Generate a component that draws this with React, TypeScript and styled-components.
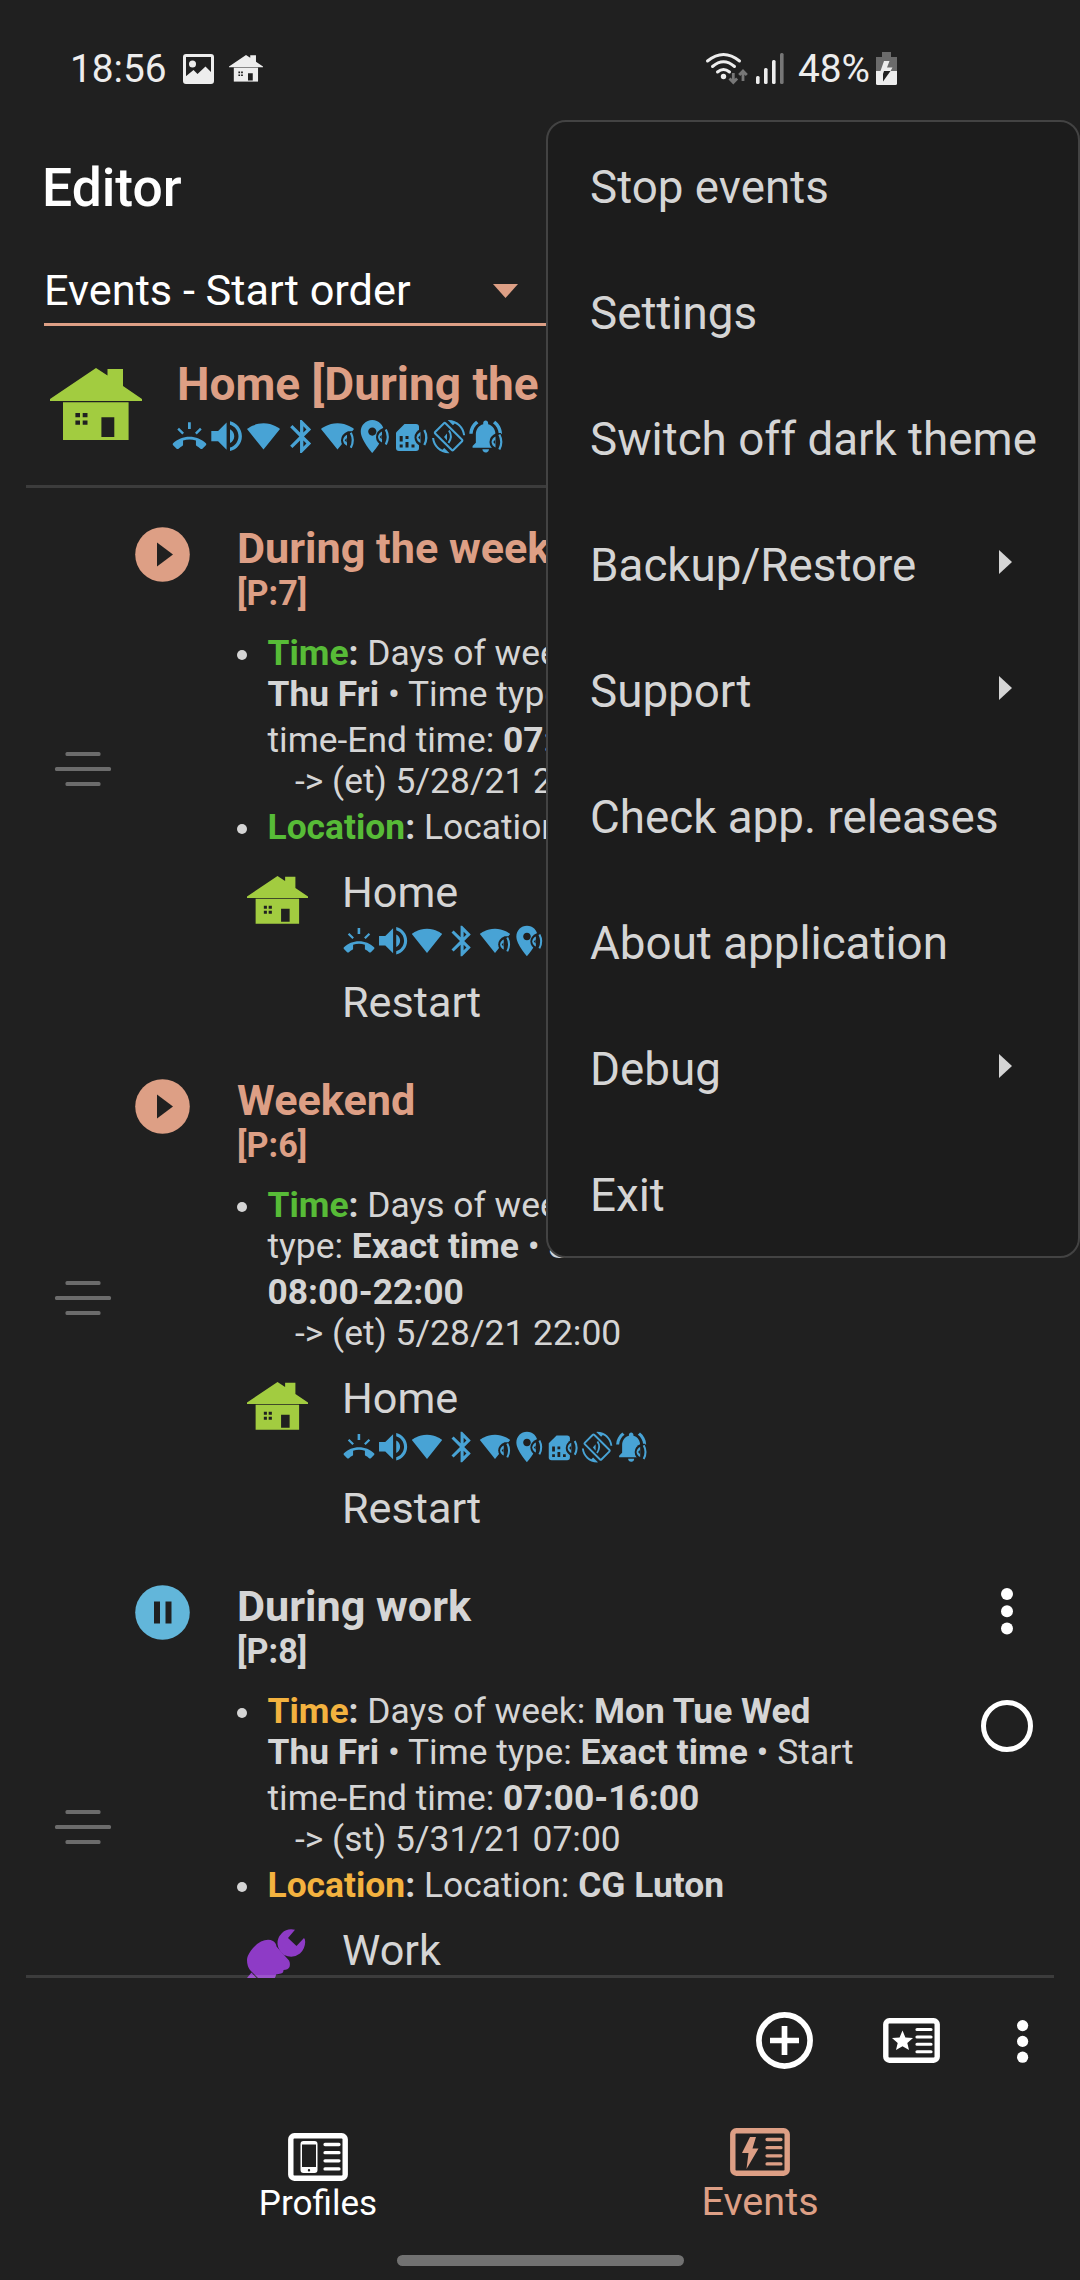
import React from "react";
import styled, { createGlobalStyle } from "styled-components";

const color = {
  bg: "#202020",
  menu: "#1c1c1c",
  border: "#434343",
  text: "#d5d5d5",
  accent: "#dd9f85",
  blue: "#48a3d5",
  ok: "#57bb37",
  wait: "#f3b23f",
  house: "#a2cc40",
  work: "#8e3bc6",
};

const GlobalStyle = createGlobalStyle`
  * { box-sizing: border-box; }
  body { margin: 0; background: ${color.bg}; }
`;

const Screen = styled.div`
  position: relative;
  width: 1080px;
  height: 2280px;
  overflow: hidden;
  display: flex;
  flex-direction: column;
  background: ${color.bg};
  color: ${color.text};
  font-family: Roboto, "Noto Sans", sans-serif;
`;

const Icon = styled.svg`
  display: block;
  flex: none;
  overflow: visible;
`;

/* ---------- status bar ---------- */
const StatusBar = styled.header`
  flex: none;
  display: flex;
  justify-content: space-between;
  align-items: center;
  height: 137px;
  padding: 0 183px 0 70px;
  color: #ededed;
  font-size: 38.8px;
  line-height: 46px;
`;
const StatusGroup = styled.div`
  display: flex;
  align-items: center;
`;
const StatusIcon = styled(Icon)<{ $left: number }>`
  margin-left: ${(p) => p.$left}px;
`;
const Percent = styled.span`
  margin-left: 14px;
`;

/* ---------- top ---------- */
const TitleBar = styled.h1`
  flex: none;
  margin: 0;
  height: 103px;
  padding-left: 42px;
  color: #fff;
  font-size: 53.4px;
  font-weight: 500;
  line-height: 101px;
`;
const Spinner = styled.div`
  flex: none;
  display: flex;
  align-items: center;
  height: 86px;
  margin: 0 44px;
  padding-top: 18px;
  border-bottom: 3px solid ${color.accent};
  color: #fff;
  font-size: 43.3px;
`;
const SpinnerText = styled.span`
  width: 449px;
`;
const ActiveProfile = styled.section`
  flex: none;
  display: flex;
  height: 162px;
  margin: 0 26px;
  padding: 31px 0 0 24px;
  border-bottom: 3px solid #3c3c3c;
`;
const ActiveText = styled.div`
  padding-left: 29px;
`;
const ActiveName = styled.div`
  padding-left: 6px;
  color: ${color.accent};
  font-size: 46px;
  font-weight: 700;
  line-height: 54px;
  white-space: nowrap;
`;
const HeaderHouse = styled.div`
  padding-top: 10.5px;
`;
const Indicators = styled.div<{ $top: number }>`
  display: flex;
  margin-top: ${(p) => p.$top}px;
`;

/* ---------- event list ---------- */
const EventList = styled.main`
  flex: none;
  height: 1490px;
  padding-top: 5px;
  overflow: hidden;
`;
const EventItem = styled.article`
  display: flex;
  height: max-content;
  padding-bottom: 17px;
`;
const HandleCell = styled.div`
  display: flex;
  align-items: center;
  width: 134.5px;
  padding: 17px 0 0 55px;
`;
const StateCell = styled.div`
  width: 102.5px;
  padding-top: 34px;
`;
const Body = styled.div`
  width: 709px;
  padding-top: 31px;
  white-space: nowrap;
`;
const EventName = styled.div<{ $active?: boolean }>`
  color: ${(p) => (p.$active ? color.accent : color.text)};
  font-size: 43.2px;
  font-weight: 700;
  line-height: 50px;
`;
const Priority = styled.div<{ $active?: boolean }>`
  color: ${(p) => (p.$active ? color.accent : color.text)};
  font-size: 34.2px;
  font-weight: 700;
  line-height: 38px;
`;
const Sensors = styled.ul`
  list-style: none;
  margin: 21px 0 0;
  padding: 0;
  font-size: 35.4px;
  line-height: 41px;
`;
const Sensor = styled.li`
  display: flex;
  padding-bottom: 5px;
`;
const Bullet = styled.span`
  flex: none;
  width: 10px;
  height: 10px;
  margin: 17px 20.5px 0 0;
  border-radius: 50%;
  background: ${color.text};
`;
const Line = styled.div<{ $gap?: boolean; $indent?: boolean }>`
  margin-top: ${(p) => (p.$gap ? 5 : 0)}px;
  padding-left: ${(p) => (p.$indent ? 27.5 : 0)}px;
`;
const SensorName = styled.b<{ $ok?: boolean }>`
  color: ${(p) => (p.$ok ? color.ok : color.wait)};
`;
const ProfileRow = styled.div`
  display: flex;
  margin-top: 15px;
`;
const ProfileIcon = styled.div<{ $top: number }>`
  width: 105px;
  padding: ${(p) => p.$top}px 0 0 9.5px;
`;
const ProfileName = styled.div`
  font-size: 43.2px;
  line-height: 50px;
`;
const AfterEnd = styled(ProfileName)`
  margin-top: 20px;
`;
const Actions = styled.div`
  display: flex;
  flex-direction: column;
  align-items: center;
  width: 121px;
  padding-top: 37px;
  gap: 66px;
`;
const RunState = styled.span`
  width: 52px;
  height: 52px;
  border: 5.5px solid #fff;
  border-radius: 50%;
`;

/* ---------- bottom ---------- */
const Divider = styled.div`
  flex: none;
  height: 3px;
  margin: -3px 26px 0;
  background: rgba(255, 255, 255, 0.13);
  z-index: 1;
`;
const Toolbar = styled.div`
  flex: none;
  display: flex;
  justify-content: flex-end;
  align-items: center;
  gap: 70px;
  height: 125px;
  padding-right: 52px;
  color: #fff;
`;
const Overflow = styled.div`
  margin: 1px 0 0 7px;
`;
const Tabs = styled.nav`
  flex: none;
  display: grid;
  grid-template-columns: 442px 442px;
  justify-content: center;
  height: 152px;
  padding-right: 2px;
`;
const Tab = styled.div<{ $active?: boolean }>`
  display: flex;
  flex-direction: column;
  align-items: center;
  padding-top: ${(p) => (p.$active ? 24.5 : 30)}px;
  color: ${(p) => (p.$active ? color.accent : "#fff")};
  font-size: ${(p) => (p.$active ? 39.6 : 35.1)}px;
  line-height: ${(p) => (p.$active ? 52 : 44)}px;
`;
const GestureBar = styled.div`
  flex: none;
  width: 287px;
  height: 11px;
  margin: 0 auto;
  border-radius: 6px;
  background: #717171;
`;

/* ---------- popup menu ---------- */
const Menu = styled.div`
  position: absolute;
  z-index: 2;
  top: 120px;
  left: 546px;
  width: 534px;
  height: 1138px;
  border: 2px solid ${color.border};
  border-radius: 20px;
  background: ${color.menu};
`;
const MenuItem = styled.div`
  display: flex;
  justify-content: space-between;
  align-items: center;
  height: 126px;
  padding: 6px 66px 0 42px;
  font-size: 45.75px;
  line-height: 54px;
  white-space: nowrap;
`;
const SubmenuArrow = styled(Icon)`
  margin-bottom: 8px;
`;

/* ---------- drawings ---------- */
const House = ({ w, fill, hole = color.bg }: { w: number; fill: string; hole?: string }) => (
  <Icon width={w} height={(w * 72) / 92} viewBox="0 0 92 72" fill={fill}>
    <path d="M46 0 57.5 7.5V1H73V18L92 31V33H0V31Z" />
    <path d="M13 34.3H78.6V72H13Z" />
    <path fill={hole} d="M25.4 45H30v4.3H25.4ZM32.7 45h4.8v4.3H32.7ZM25.4 52.6H30v4.2H25.4ZM32.7 52.6h4.8v4.2H32.7ZM51.4 49.3H64.3V69H51.4Z" />
  </Icon>
);

const WIFI = "M12.01 21.49L23.64 7c-.45-.34-4.93-4-11.64-4C5.28 3 .81 6.66.36 7l11.63 14.49.01.01.01-.01z";

const Link = ({ x, y }: { x: number; y: number }) => (
  <g transform={`translate(${x} ${y})`}>
    <path fill={color.bg} d="M1.5-9Q-5.5-6-5.5 0T1.5 9L6 9V-9Z" />
    <path d="M-3.5 0Q-3 -4 .5 -5.5V5.5Q-3 4-3.5 0Z" />
    <path fill={color.bg} d="M-1.8 0 .2-2.2V2.2Z" />
    <path d="M4.3-7.5Q8.3 0 4.3 7.5" fill="none" stroke={color.blue} strokeWidth="2.2" />
  </g>
);

const glyphs: React.ReactNode[] = [
  <>
    <path d="M17 4.3h2.8V11H17ZM6.3 11.4 8 9.7l5 5-1.7 1.7ZM30.7 11.4 29 9.7l-5 5 1.7 1.7Z" />
    <path transform="translate(1.7 8.9) scale(1.4)" d="M12 9c-1.6 0-3.15.25-4.6.72v3.1c0 .39-.23.74-.56.9-.98.49-1.87 1.12-2.66 1.85-.18.18-.43.28-.7.28-.28 0-.53-.11-.71-.29L.29 13.08c-.18-.17-.29-.42-.29-.7 0-.28.11-.53.29-.71C3.34 8.78 7.46 7 12 7s8.66 1.78 11.71 4.67c.18.18.29.43.29.71 0 .28-.11.53-.29.71l-2.48 2.48c-.18.18-.43.29-.71.29-.27 0-.52-.11-.7-.28-.79-.74-1.69-1.36-2.67-1.85-.33-.16-.56-.5-.56-.9v-3.1C15.15 9.25 13.6 9 12 9z" />
  </>,
  <path transform="translate(-1.8 -2.2) scale(1.7)" d="M3 9v6h4l5 5V4L7 9H3zm13.5 3c0-1.77-1.02-3.29-2.5-4.03v8.05c1.48-.73 2.5-2.25 2.5-4.02zM14 3.23v2.06c2.89.86 5 3.54 5 6.71s-2.11 5.85-5 6.71v2.06c4.01-.91 7-4.49 7-8.77s-2.99-7.86-7-8.77z" />,
  <path transform="translate(1.5 1.05) scale(1.417)" d={WIFI} />,
  <path transform="translate(-.1 -1.3) scale(1.65)" d="M17.71 7.71L12 2h-1v7.59L6.41 5 5 6.41 10.59 12 5 17.59 6.41 19 11 14.41V22h1l5.71-5.71-4.3-4.29 4.3-4.29zM13 5.83l1.88 1.88L13 9.59V5.83zm1.88 10.46L13 18.17v-3.76l1.88 1.88z" />,
  <>
    <path transform="translate(1.5 1.05) scale(1.417)" d={WIFI} />
    <Link x={27.5} y={22.3} />
  </>,
  <>
    <path transform="translate(-3.5 -1.3) scale(1.65)" d="M12 2C8.13 2 5 5.13 5 9c0 5.25 7 13 7 13s7-7.75 7-13c0-3.87-3.13-7-7-7zm0 9.5c-1.38 0-2.5-1.12-2.5-2.5s1.12-2.5 2.5-2.5 2.5 1.12 2.5 2.5-1.12 2.5-2.5 2.5z" />
    <Link x={25.5} y={19} />
  </>,
  <>
    <path d="M11.5 6H23a3 3 0 0 1 3 3V30a3 3 0 0 1-3 3H6a3 3 0 0 1-3-3V14.5Z" />
    <path fill={color.bg} d="M6.7 18h3v5.5h-3ZM6.7 26.5h3v3h-3ZM12.5 18h3v3h-3ZM12.5 24h3v5.5h-3ZM18.5 26.5h3v3h-3Z" />
    <Link x={27} y={19.5} />
  </>,
  <>
    <path transform="translate(2 2) scale(1.385)" d="M16.48 2.52c3.27 1.55 5.61 4.72 5.97 8.48h1.5C23.44 4.84 18.29 0 12 0l-.66.03 3.81 3.81 1.33-1.32zm-6.25-.77c-.59-.59-1.54-.59-2.12 0L1.75 8.11c-.59.59-.59 1.54 0 2.12l12.02 12.02c.59.59 1.54.59 2.12 0l6.36-6.36c.59-.59.59-1.54 0-2.12L10.23 1.75zm4.6 19.44L2.81 9.17l6.36-6.36 12.02 12.02-6.36 6.36zm-7.31.29C4.25 19.94 1.91 16.76 1.55 13H.05C.56 19.16 5.71 24 12 24l.66-.03-3.81-3.81-1.33 1.32z" />
    <path d="M14 19l3-3.5v7Z" />
    <path d="M19 12.5Q23 18.5 18.5 25" fill="none" stroke={color.blue} strokeWidth="2" />
  </>,
  <>
    <path transform="translate(-1 -1.5) scale(1.64)" d="M7.58 4.08L6.15 2.65C3.75 4.48 2.17 7.3 2.03 10.5h2c.15-2.65 1.51-4.97 3.55-6.42zm12.39 6.42h2c-.15-3.2-1.73-6.02-4.12-7.85l-1.42 1.43c2.02 1.45 3.39 3.77 3.54 6.42zM18 11c0-3.07-1.64-5.64-4.5-6.32V4c0-.83-.67-1.5-1.5-1.5s-1.5.67-1.5 1.5v.68C7.63 5.36 6 7.92 6 11v5l-2 2v1h16v-1l-2-2v-5zm-6 11c.14 0 .27-.01.4-.04.65-.14 1.18-.58 1.44-1.18.1-.24.15-.5.15-.78h-4c.01 1.1.9 2 2.01 2z" />
    <Link x={28} y={24} />
  </>,
];

const IndicatorRow = ({ size, top }: { size: number; top: number }) => (
  <Indicators $top={top}>
    {glyphs.map((g, i) => (
      <Icon key={i} width={size} height={size} viewBox="0 0 37 37" fill={color.blue}>
        {g}
      </Icon>
    ))}
  </Indicators>
);

const Handle = () => (
  <Icon width="56" height="34" viewBox="0 0 56 34" fill="#6c6c6c">
    <rect x="10.5" y="0" width="35" height="4" rx="1.5" />
    <rect x="0" y="15" width="56" height="4" rx="1.5" />
    <rect x="10.5" y="30" width="35" height="4" rx="1.5" />
  </Icon>
);

const State = ({ running }: { running: boolean }) => (
  <Icon width="55" height="55" viewBox="0 0 55 55">
    <circle cx="27.5" cy="27.5" r="27.3" fill={running ? color.accent : "#62b6da"} />
    <path fill={color.bg} d={running ? "M22 15.5 38 27.5 22 39.5Z" : "M19 16.5H25V38.5H19ZM30.5 16.5H36.5V38.5H30.5Z"} />
  </Icon>
);

const Dots = ({ r, step }: { r: number; step: number }) => (
  <Icon width={r * 2} height={r * 2 + step * 2} fill="#fff">
    {[0, 1, 2].map((i) => (
      <circle key={i} cx={r} cy={r + step * i} r={r} />
    ))}
  </Icon>
);

const WorkIcon = () => (
  <Icon width="59" height="59" viewBox="0 0 59 59" fill={color.work}>
    <path d="M0 31Q0 27 4 21.5 9 15 14 12.5 21 9.5 26 12 29 13.5 29.5 17.5L42 31.5Q43.5 34 42.5 38 41 41 36.5 41 36.5 44 34 44.5L29 45.5Q29 48 27 50L22 56 12 50 3 41Q0 37 0 31Z" />
    <path d="M48 .7Q40-1 35 4 30 9 30.5 15 31 21 37 26 46 30 53 24.5 58 20 58.2 13 58.2 10 57 9L49.5 17 41 9Z" />
    <path d="M0 49 4.5 43.5 13 53 6 59Z" />
  </Icon>
);

const rules = "M0 0h14M0 7.9h14M0 15.8h14M0 23.7h14";

const Card = ({ w, h, children, x, y, k }: { w: number; h: number; children: React.ReactNode; x: number; y: number; k: number }) => (
  <Icon width={w} height={h} viewBox={`0 0 ${w} ${h}`} fill="currentColor">
    <rect x="2.8" y="2.8" width={w - 5.6} height={h - 5.6} rx="3.5" fill="none" stroke="currentColor" strokeWidth="5.4" />
    <path transform={`translate(${x} ${y}) scale(1 ${k})`} d={rules} stroke="currentColor" strokeWidth="3.2" strokeLinecap="round" />
    {children}
  </Icon>
);

interface EventData {
  name: string;
  priority: number;
  active: boolean;
  lines: React.ReactNode[];
  location?: string;
  profile: string;
}

const events: EventData[] = [
  {
    name: "During the week",
    priority: 7,
    active: true,
    lines: [
      <>Days of week: <b>Mon Tue Wed</b></>,
      <><b>Thu Fri</b> • Time type: <b>Exact time</b> • Start</>,
      <>time-End time: <b>07:00-22:00</b></>,
      <>-&gt; (et) 5/28/21 22:00</>,
    ],
    location: "Home",
    profile: "Home",
  },
  {
    name: "Weekend",
    priority: 6,
    active: true,
    lines: [
      <>Days of week: <b>Sun Sat</b> • Time</>,
      <>type: <b>Exact time</b> • Start time-End time:</>,
      <b>08:00-22:00</b>,
      <>-&gt; (et) 5/28/21 22:00</>,
    ],
    profile: "Home",
  },
  {
    name: "During work",
    priority: 8,
    active: false,
    lines: [
      <>Days of week: <b>Mon Tue Wed</b></>,
      <><b>Thu Fri</b> • Time type: <b>Exact time</b> • Start</>,
      <>time-End time: <b>07:00-16:00</b></>,
      <>-&gt; (st) 5/31/21 07:00</>,
    ],
    location: "CG Luton",
    profile: "Work",
  },
];

const menu = [
  { label: "Stop events" },
  { label: "Settings" },
  { label: "Switch off dark theme" },
  { label: "Backup/Restore", sub: true },
  { label: "Support", sub: true },
  { label: "Check app. releases" },
  { label: "About application" },
  { label: "Debug", sub: true },
  { label: "Exit" },
];

const EventView = ({ e }: { e: EventData }) => (
  <EventItem>
    <HandleCell><Handle /></HandleCell>
    <StateCell><State running={e.active} /></StateCell>
    <Body>
      <EventName $active={e.active}>{e.name}</EventName>
      <Priority $active={e.active}>[P:{e.priority}]</Priority>
      <Sensors>
        <Sensor>
          <Bullet />
          <div>
            <Line><SensorName $ok={e.active}>Time</SensorName><b>:</b> {e.lines[0]}</Line>
            <Line>{e.lines[1]}</Line>
            <Line $gap>{e.lines[2]}</Line>
            <Line $indent>{e.lines[3]}</Line>
          </div>
        </Sensor>
        {e.location && (
          <Sensor>
            <Bullet />
            <Line><SensorName $ok={e.active}>Location</SensorName><b>:</b> Location: <b>{e.location}</b></Line>
          </Sensor>
        )}
      </Sensors>
      <ProfileRow>
        <ProfileIcon $top={e.profile === "Work" ? 3 : 8}>
          {e.profile === "Work" ? <WorkIcon /> : <House w={61} fill={color.house} />}
        </ProfileIcon>
        <div>
          <ProfileName>{e.profile}</ProfileName>
          <IndicatorRow size={34} top={6} />
          <AfterEnd>Restart</AfterEnd>
        </div>
      </ProfileRow>
    </Body>
    <Actions>
      <Dots r={6} step={17.2} />
      <RunState />
    </Actions>
  </EventItem>
);

export default function App() {
  return (
    <Screen>
      <GlobalStyle />
      <StatusBar>
        <StatusGroup>
          18:56
          <StatusIcon $left={16} width="31" height="30" viewBox="0 0 31 30">
            <rect x="1.5" y="1.5" width="28" height="27" rx="1.5" fill="none" stroke="#ededed" strokeWidth="3" />
            <circle cx="9.5" cy="10" r="3.5" fill="#ededed" />
            <path d="M2 23 10.5 16 14.5 20 22.5 12.5 29 19V28H2Z" fill="#ededed" />
          </StatusIcon>
          <StatusIcon as="span" $left={15}><House w={34} fill="#ededed" /></StatusIcon>
        </StatusGroup>
        <StatusGroup>
          <Icon width="42" height="32" viewBox="0 0 42 32" fill="none">
            <g stroke="#ededed" strokeWidth="3" strokeLinecap="round">
              <path d="M1.5 8Q17.5-5 33.5 8" />
              <path d="M6.5 13.5Q17.5 4 28.5 13.5" />
              <path d="M11.5 19Q17.5 14 23.5 19" />
            </g>
            <circle cx="17.5" cy="23.5" r="2.7" fill="#ededed" />
            <path d="M27.3 20V29M23.5 25.5 27.3 29.5 31.1 25.5M37 28V19M33.2 22 37 18 40.8 22" stroke="#777" strokeWidth="2.8" />
          </Icon>
          <StatusIcon $left={8} width="28" height="31" viewBox="0 0 28 31" fill="#ededed">
            <rect x="0" y="23" width="3.6" height="8" rx="1.5" />
            <rect x="8" y="15" width="3.6" height="16" rx="1.5" />
            <rect x="16" y="7" width="3.6" height="24" rx="1.5" />
            <rect x="24" y="0" width="3.6" height="31" rx="1.5" fill="#777" />
          </StatusIcon>
          <Percent>48%</Percent>
          <StatusIcon $left={6} width="21" height="33" viewBox="0 0 21 33">
            <path d="M6 0H15V5H21V19H0V5H6Z" fill="#6b6b6b" />
            <path d="M0 19H21V31.5Q21 33 19.5 33H1.5Q0 33 0 31.5Z" fill="#ededed" />
            <path d="M8 9H13.5L11 15.5H16.5L14.5 19H4.5Z" fill="#ededed" />
            <path d="M8 19H14.5L7 29.5V22Z" fill={color.bg} />
          </StatusIcon>
        </StatusGroup>
      </StatusBar>
      <TitleBar>Editor</TitleBar>
      <Spinner>
        <SpinnerText>Events - Start order</SpinnerText>
        <Icon width="25" height="14" viewBox="0 0 25 14" fill={color.accent}><path d="M0 0H25L12.5 14Z" /></Icon>
      </Spinner>
      <ActiveProfile>
        <HeaderHouse><House w={92} fill={color.house} /></HeaderHouse>
        <ActiveText>
          <ActiveName>Home [During the week]</ActiveName>
          <IndicatorRow size={37} top={7} />
        </ActiveText>
      </ActiveProfile>
      <EventList>
        {events.map((e) => <EventView key={e.name} e={e} />)}
      </EventList>
      <Divider />
      <Toolbar>
        <Icon width="57" height="57" viewBox="0 0 57 57" fill="none" stroke="#fff" strokeWidth="5.7">
          <circle cx="28.5" cy="28.5" r="25.6" />
          <path d="M28.5 14V43M14 28.5H43" />
        </Icon>
        <Card w={57} h={45} x={34} y={11.5} k={0.94}>
          <path d="M19.5 12.5 22.4 19.4 30 20.1 24.3 25 26 32 19.5 28.3 13 32 14.7 25 9 20.1 16.6 19.4Z" />
        </Card>
        <Overflow><Dots r={5.6} step={15.8} /></Overflow>
      </Toolbar>
      <Tabs>
        <Tab>
          <Card w={60} h={48} x={37} y={11.5} k={1.03}>
            <path fillRule="evenodd" d="M15.5 8H26.5Q29.5 8 29.5 11V37Q29.5 40 26.5 40H15.5Q12.5 40 12.5 37V11Q12.5 8 15.5 8ZM14 11.5V34H28V11.5ZM21 36A1.2 1.2 0 1 0 21 38.4 1.2 1.2 0 1 0 21 36Z" />
          </Card>
          Profiles
        </Tab>
        <Tab $active>
          <Card w={60} h={48} x={37} y={11.5} k={1.03}>
            <path d="M20 9H26L22.5 20.5H28.5L16.5 41 18.5 25H12Z" />
          </Card>
          Events
        </Tab>
      </Tabs>
      <GestureBar />
      <Menu>
        {menu.map((m) => (
          <MenuItem key={m.label}>
            {m.label}
            {m.sub && <SubmenuArrow width="13" height="24" viewBox="0 0 13 24" fill={color.text}><path d="M0 0 13 12 0 24Z" /></SubmenuArrow>}
          </MenuItem>
        ))}
      </Menu>
    </Screen>
  );
}
